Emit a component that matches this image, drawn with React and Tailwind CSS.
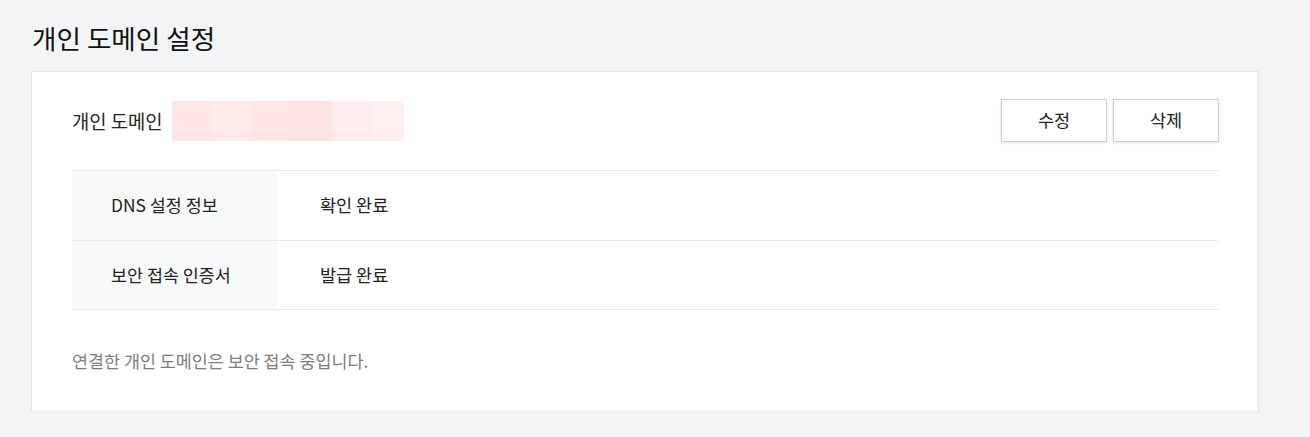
import React from "react";

const font = { fontFamily: '"Noto Sans CJK KR", "Noto Sans", sans-serif' };

export default function App() {
  return (
    <div className="w-[1310px] h-[437px] bg-[#f3f4f6] text-[#222]" style={font}>
      <div className="pl-[31px] pt-[22px]">
        <h1 className="pl-[1px] text-[26.6px] leading-[32px] text-[#111] font-normal">개인 도메인 설정</h1>
        <div className="mt-[17px] w-[1228px] bg-white border border-[#e3e5e9] px-10 pt-[27px] pb-[38px]">
          <div className="flex items-center justify-between">
            <div className="flex items-center">
              <span className="text-[18.8px] leading-[24px] mr-[9px]">개인 도메인</span>
              <div className="flex h-10">
                <div className="w-10 bg-[#fee7e6]" />
                <div className="w-10 bg-[#feebea]" />
                <div className="w-10 bg-[#fee6e5]" />
                <div className="w-10 bg-[#fee5e4]" />
                <div className="w-10 bg-[#ffeced]" />
                <div className="w-8 bg-[#ffefef]" />
              </div>
            </div>
            <div className="flex gap-[6px] mr-[-1px]">
              <button className="w-[106px] h-[43px] border border-[#c9cfd7] bg-white text-[17.5px] text-[#222] shadow-[0_1px_2px_rgba(0,0,0,0.12)]">수정</button>
              <button className="w-[106px] h-[43px] border border-[#c9cfd7] bg-white text-[17.5px] text-[#222] shadow-[0_1px_2px_rgba(0,0,0,0.12)]">삭제</button>
            </div>
          </div>
          <div className="mt-[28px] border-t border-[#e7e9ec]">
            <div className="flex h-[70px] border-b border-[#e7e9ec]">
              <div className="w-[205px] bg-[#f8f9fb] flex items-center pl-[39px] text-[17.4px]">DNS 설정 정보</div>
              <div className="flex items-center pl-[43px] text-[17.5px]">확인 완료</div>
            </div>
            <div className="flex h-[69px] border-b border-[#e7e9ec]">
              <div className="w-[205px] bg-[#f8f9fb] flex items-center pl-[39px] text-[17.4px]">보안 접속 인증서</div>
              <div className="flex items-center pl-[43px] text-[17.5px]">발급 완료</div>
            </div>
          </div>
          <p className="mt-[39px] text-[17.4px] leading-[24px] text-[#7d7d7d]">연결한 개인 도메인은 보안 접속 중입니다.</p>
        </div>
      </div>
    </div>
  );
}
